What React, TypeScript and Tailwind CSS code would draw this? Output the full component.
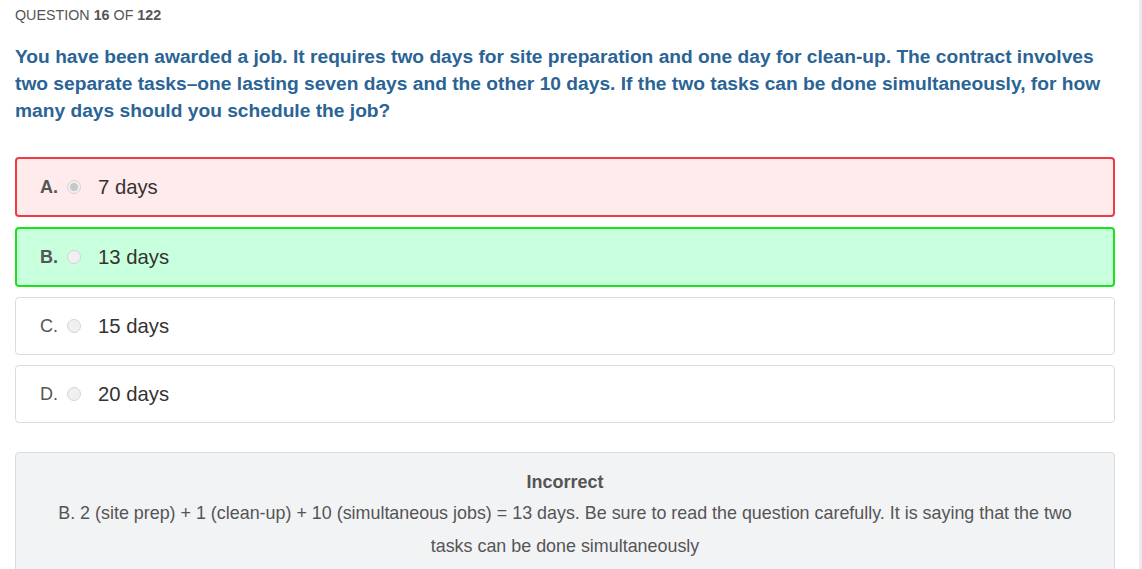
const options = [
  { key: "A", text: "7 days", state: "wrong", checked: true },
  { key: "B", text: "13 days", state: "right", checked: false },
  { key: "C", text: "15 days", state: "none", checked: false },
  { key: "D", text: "20 days", state: "none", checked: false },
];

function Radio({ checked }: { checked: boolean }) {
  return (
    <span className="flex h-[14px] w-[14px] items-center justify-center rounded-full border border-[#d4d4d4] bg-[#f0f0f0]">
      {checked && <span className="h-[8px] w-[8px] rounded-full bg-[#c8c8c8]" />}
    </span>
  );
}

export default function App() {
  return (
    <div
      className="min-h-[569px] w-[1142px] border-r-[3px] border-[#ebebf0] bg-white"
      style={{ fontFamily: '"Liberation Sans", Arial, sans-serif' }}
    >
      <div className="pl-[15px] pt-[7px]">
        {/* 문제 번호 */}
        <div className="text-[14.3px] leading-[16px] text-[#555]">
          QUESTION <b>16</b> OF <b>122</b>
        </div>

        {/* 문제 */}
        <p className="mt-[20px] w-[1100px] text-[19.2px] font-bold leading-[27px] text-[#2a6496]">
          You have been awarded a job. It requires two days for site preparation and one day for
          clean-up. The contract involves two separate tasks–one lasting seven days and the other
          10 days. If the two tasks can be done simultaneously, for how many days should you
          schedule the job?
        </p>

        {/* 보기 */}
        <ul className="mt-[33px] flex w-[1100px] flex-col gap-[10px]">
          {options.map((o) => (
            <li
              key={o.key}
              className={
                o.state === "wrong"
                  ? "flex h-[60px] items-center rounded-[4px] border-2 border-[#ee3b44] bg-[#ffebeb] pl-[23px]"
                  : o.state === "right"
                  ? "flex h-[60px] items-center rounded-[4px] border-2 border-[#1be21b] bg-[#c8ffdc] pl-[23px]"
                  : "flex h-[58px] items-center rounded-[4px] border border-[#dcdcdc] bg-white pl-[24px]"
              }
            >
              <span
                className={
                  o.state === "none"
                    ? "w-[27px] text-[18px] text-[#555]"
                    : "w-[27px] text-[18px] font-bold text-[#555]"
                }
              >
                {o.key}.
              </span>
              <Radio checked={o.checked} />
              <span className="ml-[17px] text-[20.3px] text-[#333]">{o.text}</span>
            </li>
          ))}
        </ul>

        {/* 해설 */}
        <div className="mt-[29px] w-[1100px] rounded-[4px] border border-[#dcdcdc] bg-[#f2f3f5] px-[38px] pb-[10px] pt-[16px] text-center text-[#555]">
          <div className="text-[18px] font-bold leading-[26px]">Incorrect</div>
          <p className="mt-[2px] text-[17.9px] leading-[33px]">
            B. 2 (site prep) + 1 (clean-up) + 10 (simultaneous jobs) = 13 days. Be sure to read the
            question carefully. It is saying that the two tasks can be done simultaneously
          </p>
        </div>
      </div>
    </div>
  );
}
